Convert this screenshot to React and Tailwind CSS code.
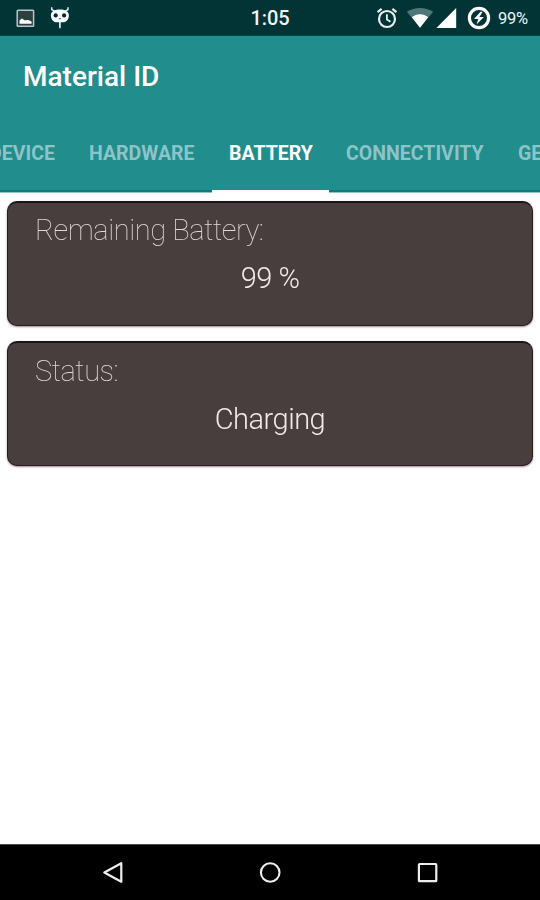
const TABS = [
  { label: "DEVICE", width: "w-[100px] -ml-[28px]" },
  { label: "HARDWARE", width: "w-[140px]" },
  { label: "BATTERY", width: "w-[117px]", active: true },
  { label: "CONNECTIVITY", width: "w-[172px]" },
  { label: "GENERAL", width: "w-[118px]" },
];

const CARDS = [
  { label: "Remaining Battery:", value: "99 %", inset: "pt-0" },
  { label: "Status:", value: "Charging", inset: "pt-px" },
];

function ImageIcon() {
  return (
    <svg className="ml-[16px] h-[19px] w-[19px]" viewBox="0 0 19 19">
      <rect x="1.2" y="1.2" width="16.4" height="16" rx="0.8" fill="#2c3f41" stroke="#b9c5c7" strokeWidth="1.5" />
      <path d="M3.5 14.8v-3.4l2.4-1.8 2.7 1.6 3.6-.2 3.4 1.4v2.4z" fill="#fff" />
    </svg>
  );
}

function MascotIcon() {
  return (
    <svg className="ml-[14px] h-[24px] w-[22px]" viewBox="0 0 22 24">
      <path d="M2.8 1.8v1.8l2.6 1.6M19 1.8v1.8l-2.6 1.6" fill="none" stroke="#f4f8f8" strokeWidth="1.4" strokeLinecap="round" />
      <path
        d="M10.9 3.4c5 0 9 1.8 9 6 0 4-2.8 6.9-6.2 6.9H8.1c-3.4 0-6.2-2.9-6.2-6.9 0-4.2 4-6 9-6z"
        fill="#f7fafa"
      />
      <circle cx="6.7" cy="9.4" r="2.1" fill="#02292b" />
      <circle cx="15.1" cy="9.4" r="2.1" fill="#02292b" />
      <path d="M9.9 12.7h2" stroke="#02292b" strokeWidth="0.8" />
      <path d="M10.9 15v6.6" stroke="#f4f8f8" strokeWidth="1.6" strokeLinecap="round" />
    </svg>
  );
}

function AlarmIcon() {
  return (
    <svg className="h-[22px] w-[22px]" viewBox="0 0 22 22" fill="none" stroke="#e9f0f0">
      <circle cx="11" cy="12" r="8" strokeWidth="2.2" />
      <path d="M1.6 5.2 5.6 1.8M20.4 5.2l-4-3.4" strokeWidth="2.2" />
      <path d="M10.9 7.2v5.2l3.6 2.3" strokeWidth="1.8" />
    </svg>
  );
}

function WifiIcon() {
  return (
    <svg className="ml-[8px] h-[22px] w-[28px]" viewBox="0 0 28 22">
      <path d="M.8 4.8C8.2-.4 19.8-.4 27.2 4.8L14 20.8z" fill="#4e7778" />
      <path d="M5.9 10.3c4.6-4.1 11.6-4.1 16.2 0L14 20.8z" fill="#fff" />
    </svg>
  );
}

function BatteryIcon() {
  return (
    <svg className="ml-[10px] h-[24px] w-[24px]" viewBox="0 0 24 24">
      <circle cx="12" cy="12" r="9.6" fill="none" stroke="#fff" strokeWidth="3.2" />
      <path d="M13.5 5.8 7 13h4.3l-1.8 5.6 7.4-7.6h-4.5l3.2-5.2z" fill="#fff" />
    </svg>
  );
}

function StatusBar() {
  return (
    <div className="grid h-[36px] shrink-0 grid-cols-[1fr_60px_1fr] items-center border-b border-[#024547] bg-[#023436] text-white">
      <div className="flex items-center">
        <ImageIcon />
        <MascotIcon />
      </div>
      <div className="pt-px text-center text-[20px] leading-[35px] font-medium tracking-[-0.1px] text-[#f0f5f5]">1:05</div>
      <div className="flex h-[35px] items-center justify-end pr-[11px]">
        <AlarmIcon />
        <WifiIcon />
        <svg className="ml-[2px] h-[22px] w-[21px]" viewBox="0 0 21 22">
          <path d="M20.2 1v20H.4z" fill="#fff" />
        </svg>
        <BatteryIcon />
        <span className="ml-[7px] w-[31px] pt-px text-[16.5px] leading-[34px] tracking-[-0.3px] whitespace-nowrap text-[#eef4f4]">99%</span>
      </div>
    </div>
  );
}

function Header() {
  return (
    <header className="flex h-[157px] shrink-0 flex-col overflow-hidden bg-[#218d8c]">
      <h1 className="h-[82px] pl-[23px] text-[28px] leading-[82px] font-medium text-white">Material ID</h1>
      <nav className="flex flex-1 bg-[linear-gradient(to_top,#8cc6c6_1px,#087d7e_1px,#087d7e_3px,transparent_3px)]">
        {TABS.map((tab) => (
          <div
            key={tab.label}
            className={`flex h-full shrink-0 flex-col ${tab.width} ${tab.active ? "text-white" : "text-[#8cc4c9]"}`}
          >
            <span className="block h-[72px] px-[17px] text-left text-[19.5px] leading-[72px] font-bold tracking-[0.02px] whitespace-nowrap">
              {tab.label}
            </span>
            {tab.active && <span className="h-[3px] shrink-0 bg-white" />}
          </div>
        ))}
      </nav>
    </header>
  );
}

function InfoCard({ label, value, inset }) {
  return (
    <section
      className={`h-[125px] rounded-[10px] border border-t-2 border-[#291b20] border-t-[#1b1517] bg-[#483e3e] shadow-[0_1px_2px_rgba(60,20,35,0.5)] will-change-transform ${inset}`}
    >
      <h2 className="pl-[27px] text-[29px] leading-[54px] font-thin tracking-[-0.42px] text-[#e2d8d8]">{label}</h2>
      <p className="-mt-[6px] text-center text-[29px] leading-[54px] font-light tracking-[-0.5px] text-[#f2eaea]">{value}</p>
    </section>
  );
}

function NavigationBar() {
  return (
    <footer className="flex h-[56px] shrink-0 items-center justify-between border-t border-[#4a4a4a] bg-black px-[100px]">
      <svg className="h-[26px] w-[26px]" viewBox="0 0 26 26" fill="none" stroke="#eee" strokeWidth="2.2" strokeLinejoin="round">
        <path d="M21.3 3.2v18.6L4.3 12.5z" />
      </svg>
      <svg className="h-[26px] w-[26px]" viewBox="0 0 26 26" fill="none" stroke="#eee" strokeWidth="2.1">
        <circle cx="13.2" cy="12.5" r="9.3" />
      </svg>
      <svg className="h-[26px] w-[26px]" viewBox="0 0 26 26" fill="none" stroke="#eee" strokeWidth="2.2">
        <rect x="4.9" y="4" width="17.4" height="17.2" rx="0.8" />
      </svg>
    </footer>
  );
}

export default function App() {
  return (
    <div className="flex h-[900px] w-[540px] flex-col overflow-hidden bg-white font-['Roboto',sans-serif]">
      <StatusBar />
      <Header />
      <main className="flex flex-1 flex-col gap-[15px] px-[7px] pt-[8px]">
        {CARDS.map((card) => (
          <InfoCard key={card.label} {...card} />
        ))}
      </main>
      <NavigationBar />
    </div>
  );
}
